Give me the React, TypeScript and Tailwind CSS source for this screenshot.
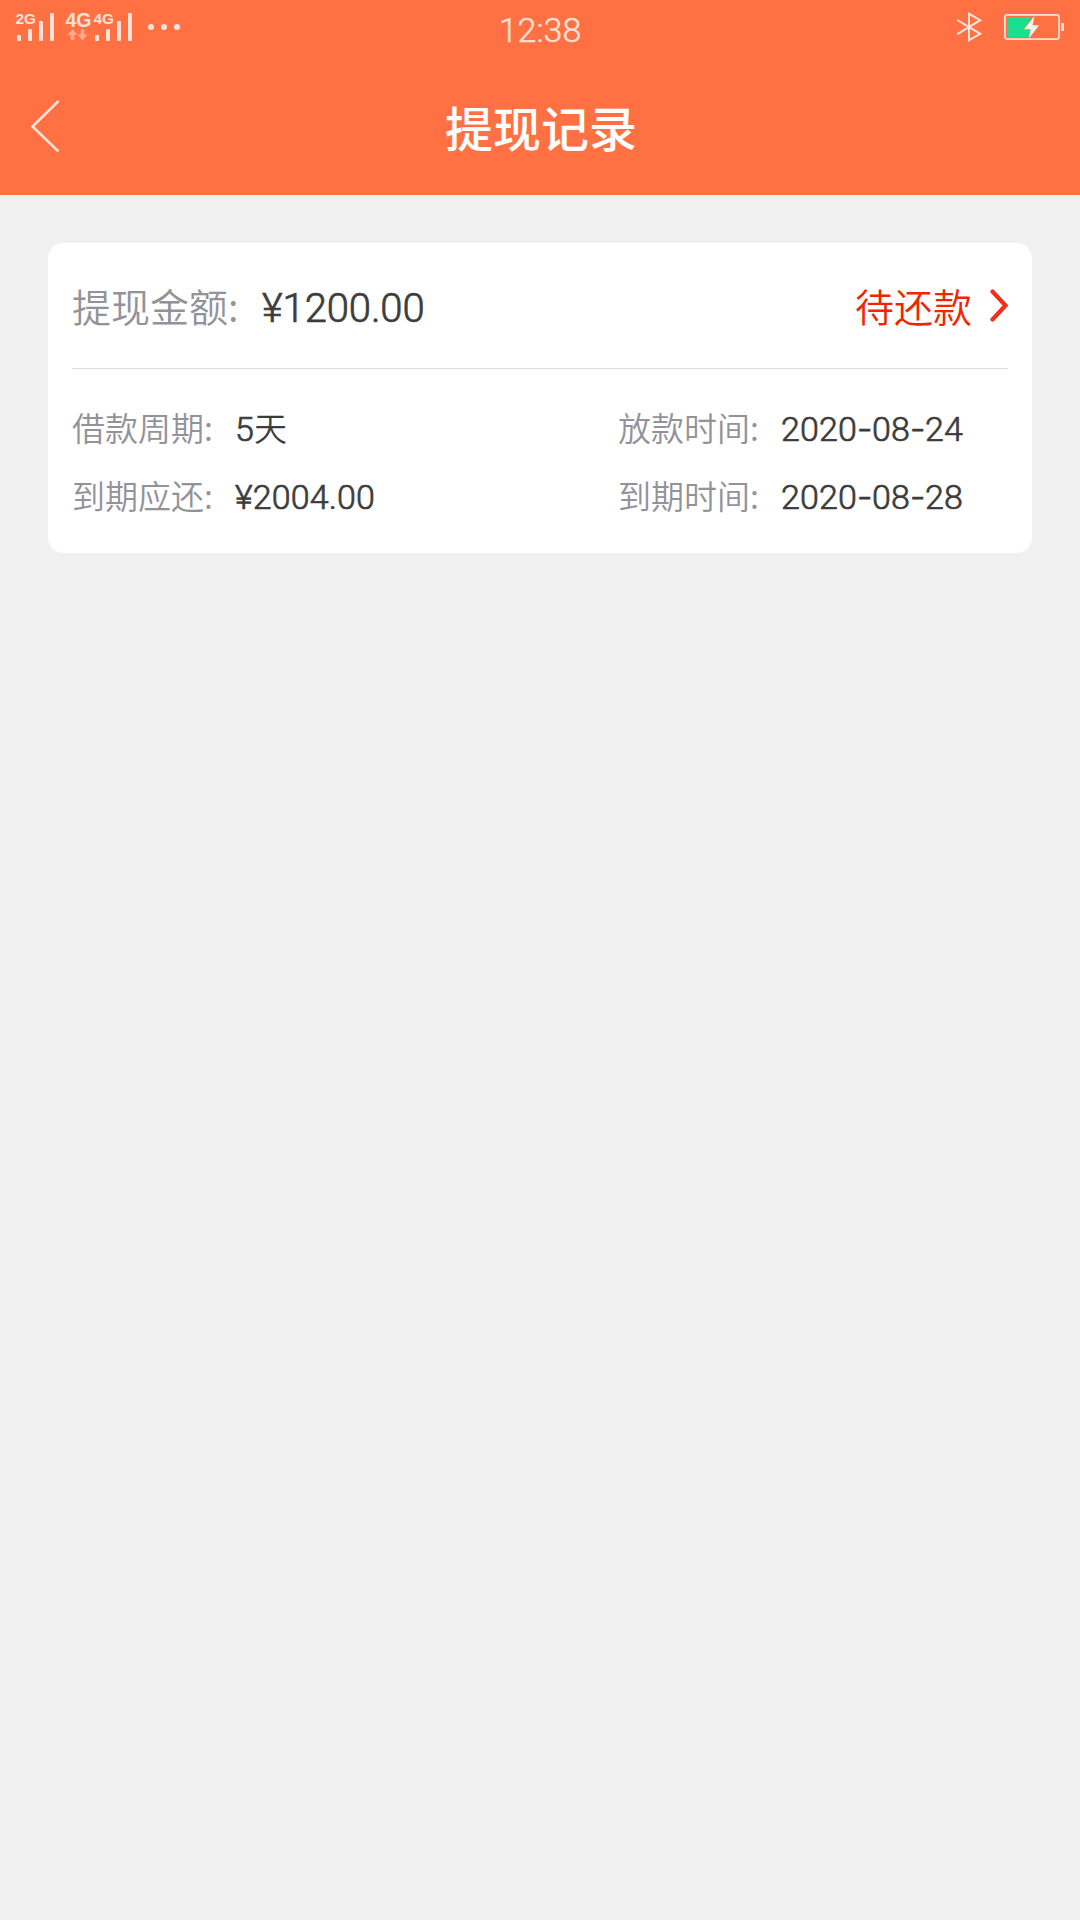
import React from 'react';

interface RecordField {
  label: string;
  value: string;
}

interface WithdrawRecord {
  amount: string;
  status: string;
  left: RecordField[];
  right: RecordField[];
}

const records: WithdrawRecord[] = [
  {
    amount: '¥1200.00',
    status: '待还款',
    left: [
      { label: '借款周期:', value: '5天' },
      { label: '到期应还:', value: '¥2004.00' },
    ],
    right: [
      { label: '放款时间:', value: '2020-08-24' },
      { label: '到期时间:', value: '2020-08-28' },
    ],
  },
];

function SignalIcons() {
  return (
    <svg width="190" height="54" viewBox="0 0 190 54" fill="#ffe2d9" className="font-['Liberation_Sans',sans-serif] font-bold">
      <text x="15.5" y="24" fontSize="15.3" textLength="20.5" lengthAdjust="spacingAndGlyphs">2G</text>
      <rect x="17" y="35" width="4" height="6" rx="1" />
      <rect x="28" y="29" width="4" height="12" rx="1" />
      <rect x="39" y="21" width="4" height="20" rx="1" />
      <rect x="50" y="13" width="4" height="28" rx="1" />
      <text x="65.5" y="27" fontSize="19.5" textLength="26" lengthAdjust="spacingAndGlyphs">4G</text>
      <path d="M72.5 29l5 6h-3.2v5h-3.6v-5h-3.2zM82.5 40.5l-5-6h3.2v-5h3.6v5h3.2z" fill="#ffa98e" />
      <text x="93.5" y="24" fontSize="15.3" textLength="20.5" lengthAdjust="spacingAndGlyphs">4G</text>
      <rect x="95" y="35" width="4" height="6" rx="1" />
      <rect x="106" y="29" width="4" height="12" rx="1" />
      <rect x="117" y="21" width="4" height="20" rx="1" />
      <rect x="128" y="13" width="4" height="28" rx="1" />
      <circle cx="151" cy="27" r="3" />
      <circle cx="164" cy="27" r="3" />
      <circle cx="177" cy="27" r="3" />
    </svg>
  );
}

function BatteryIcons() {
  return (
    <svg width="130" height="54" viewBox="950 0 130 54" fill="none">
      <path d="M957.3 20l23 13.8-11.3 6.4V13.8l11.3 6.4-23 14" stroke="#ffe2d9" strokeWidth="2" />
      <rect x="1004.9" y="14.9" width="54.2" height="24.2" rx="2.5" stroke="#ffe2d9" strokeWidth="1.8" />
      <rect x="1061" y="23" width="3" height="8" fill="#ffe2d9" />
      <path d="M1007 17h25.5l-9.5 13h7l-1.2 7H1007z" fill="#1adf8c" />
      <path d="M1034.5 16l-10.5 13.3h6.6l-1.8 9.2 10.4-13.3h-6.6z" fill="#f0f4f0" />
    </svg>
  );
}

function StatusBar() {
  return (
    <div className="h-[54px] grid grid-cols-3">
      <SignalIcons />
      <div className="flex items-center justify-center pt-1.5 font-['Roboto',sans-serif] font-light text-[34px] leading-none text-[#ffe2d9] [-webkit-text-stroke:0.4px]">
        12:38
      </div>
      <div className="flex justify-end">
        <BatteryIcons />
      </div>
    </div>
  );
}

function Header() {
  return (
    <header className="h-[195px] bg-[#ff7043]">
      <StatusBar />
      <div className="h-[141px] grid grid-cols-[80px_1fr_80px]">
        <svg width="80" height="141" viewBox="0 54 80 141" fill="none">
          <path d="M58.5 101L32.5 126.5L58.5 151.5" stroke="#ffe2d9" strokeWidth="2.6" />
        </svg>
        <h1 className="pt-[38px] pl-[2px] text-center text-[48px] leading-[68px] font-medium text-white">提现记录</h1>
      </div>
    </header>
  );
}

function Value({ text }: { text: string }) {
  return (
    <span>
      {text.split('').map((ch, index) => {
        if (ch === '-') {
          return (
            <span key={index} className="inline-block w-[15px] text-center font-['Inter',sans-serif] tracking-normal">-</span>
          );
        }
        if (ch === '天') {
          return (
            <span key={index} className="text-[33px] [-webkit-text-stroke:0]">{ch}</span>
          );
        }
        return <span key={index}>{ch}</span>;
      })}
    </span>
  );
}

function FieldColumn({ fields }: { fields: RecordField[] }) {
  return (
    <div>
      {fields.map((field) => (
        <div key={field.label} className="flex h-[68px] items-center text-[33px] leading-[48px]">
          <span className="w-[163px] pb-[3px] text-[#929298] font-[350]">{field.label}</span>
          <span className="pt-[2px] text-[#3c3c3c] font-['Roboto','Noto_Sans_CJK_SC',sans-serif] font-[350] text-[34px] tracking-[0.15px] [-webkit-text-stroke:0.7px]">
            <Value text={field.value} />
          </span>
        </div>
      ))}
    </div>
  );
}

function RecordCard({ record }: { record: WithdrawRecord }) {
  return (
    <div className="h-[310px] rounded-[15px] bg-white px-6">
      <div className="h-[126px] flex items-center border-b border-[#dcdcdc]">
        <span className="w-[190px] text-[39px] font-[350] text-[#929298]">提现金额:</span>
        <span className="pt-[7px] text-[40px] tracking-[-0.1px] text-[#3c3c3c] font-['Roboto',sans-serif] font-[350] [-webkit-text-stroke:0.7px]">{record.amount}</span>
        <span className="ml-auto mr-[18px] text-[39px] font-[350] text-[#f02600]">{record.status}</span>
        <svg width="18" height="34" viewBox="0 0 18 34" fill="none">
          <path d="M2.5 2.5L15.5 16.5L2.5 30.5" stroke="#f0301c" strokeWidth="4.2" strokeLinecap="round" />
        </svg>
      </div>
      <div className="grid grid-cols-[546px_1fr] pt-[25px]">
        <FieldColumn fields={record.left} />
        <FieldColumn fields={record.right} />
      </div>
    </div>
  );
}

export default function App() {
  return (
    <div className="w-[1080px] h-[1920px] bg-[#f0f0f0] font-['Noto_Sans_CJK_SC',sans-serif]">
      <Header />
      <main className="p-12">
        {records.map((record, index) => (
          <RecordCard key={index} record={record} />
        ))}
      </main>
    </div>
  );
}
